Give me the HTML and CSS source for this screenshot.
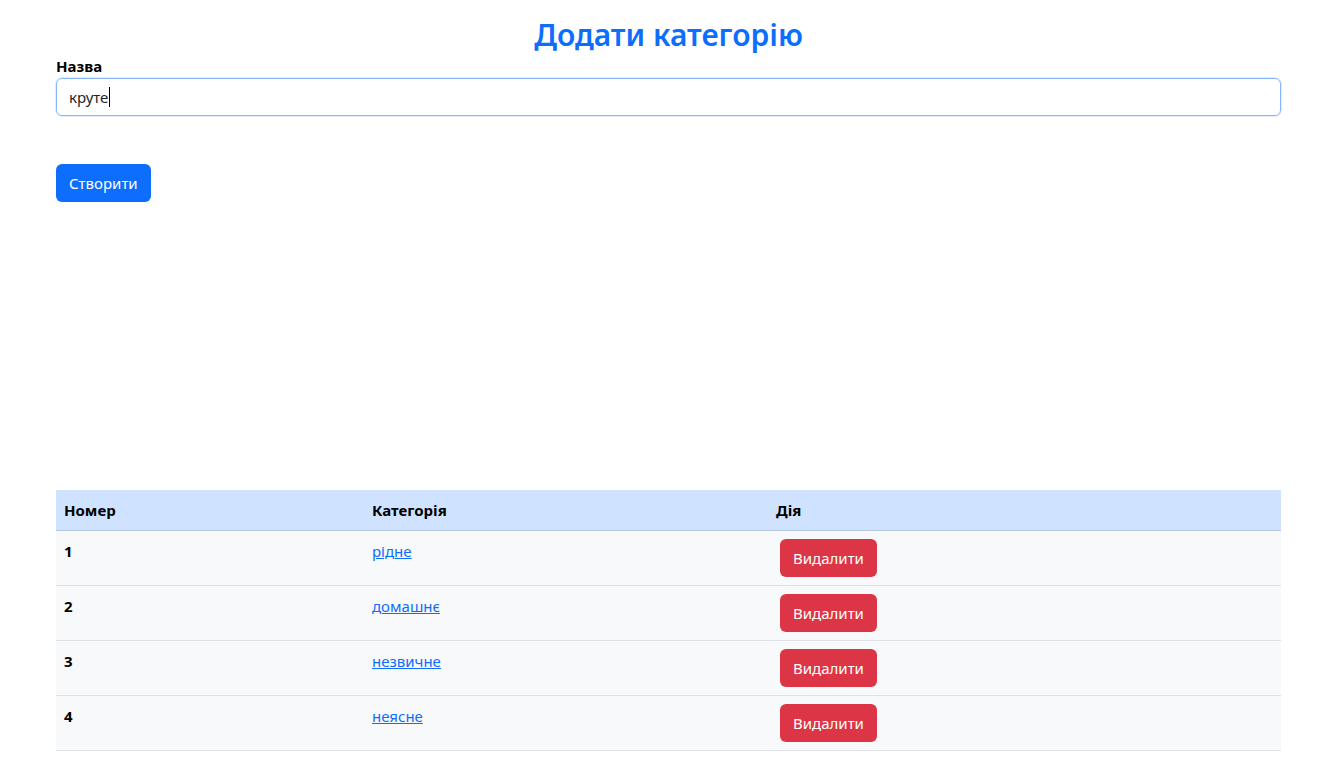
FILE: index.html
```html
<!DOCTYPE html>
<html lang="uk">
<head>
<meta charset="utf-8">
<title>Додати категорію</title>
<link rel="stylesheet" href="styles.css">
</head>
<body>
<div class="page">
  <h1 class="title">Додати категорію</h1>
  <form class="form">
    <label class="label" for="name">Назва</label>
    <div class="input">круте<span class="caret"></span></div>
    <button type="button" class="btn btn-primary">Створити</button>
  </form>
  <table class="table">
    <colgroup>
      <col class="c1"><col class="c2"><col class="c3">
    </colgroup>
    <thead>
      <tr><th>Номер</th><th>Категорія</th><th>Дія</th></tr>
    </thead>
    <tbody>
      <tr><th>1</th><td><a href="#">рідне</a></td><td><button class="btn btn-danger">Видалити</button></td></tr>
      <tr><th>2</th><td><a href="#">домашнє</a></td><td><button class="btn btn-danger">Видалити</button></td></tr>
      <tr><th>3</th><td><a href="#">незвичне</a></td><td><button class="btn btn-danger">Видалити</button></td></tr>
      <tr><th>4</th><td><a href="#">неясне</a></td><td><button class="btn btn-danger">Видалити</button></td></tr>
    </tbody>
  </table>
</div>
</body>
</html>
```
FILE: styles.css
```css
* { box-sizing: border-box; }
html, body { margin: 0; padding: 0; background: #fff; }
body {
  font-family: "Noto Sans", "Open Sans", sans-serif;
  font-size: 15px;
  line-height: 24px;
  color: #212529;
}
.page {
  padding: 16px 36px 0 56px;
}
.title {
  margin: 0;
  font-size: 30px;
  line-height: 38px;
  font-weight: 600;
  color: #0d6efd;
  text-align: center;
}
.form { display: flex; flex-direction: column; align-items: flex-start; }
.label {
  font-weight: 700;
  color: #000;
  line-height: 24px;
}
.input {
  width: 100%;
  height: 38px;
  padding: 6px 12px;
  border: 1px solid #86b7fe;
  border-radius: 6px;
  box-shadow: 0 0 0 1px rgba(13,110,253,.12);
  color: #212529;
  display: flex;
  align-items: center;
}
.caret {
  display: inline-block;
  width: 1px;
  height: 20px;
  background: #000;
  margin-left: 1px;
}
.btn {
  font-family: inherit;
  font-size: 15px;
  line-height: 24px;
  padding: 6px 12px;
  border: 1px solid transparent;
  border-radius: 6px;
  color: #fff;
  cursor: pointer;
}
.btn-primary {
  background: #0d6efd;
  margin-top: 48px;
}
.btn-danger {
  background: #dc3545;
  margin: 0 4px;
}
.table {
  width: 100%;
  margin-top: 288px;
  border-collapse: collapse;
  table-layout: fixed;
}
.c1 { width: 308px; }
.c2 { width: 404px; }
.table th, .table td {
  padding: 8px;
  text-align: left;
  vertical-align: top;
  color: #000;
}
.table thead th {
  background: #cfe2ff;
  font-weight: 700;
  border-bottom: 1px solid #b6c7e2;
  vertical-align: bottom;
}
.table tbody th, .table tbody td {
  background: #f8f9fa;
  border-bottom: 1px solid #dee2e6;
}
.table tbody th { font-weight: 700; }
.table a { color: #0d6efd; text-decoration: underline; }
```
